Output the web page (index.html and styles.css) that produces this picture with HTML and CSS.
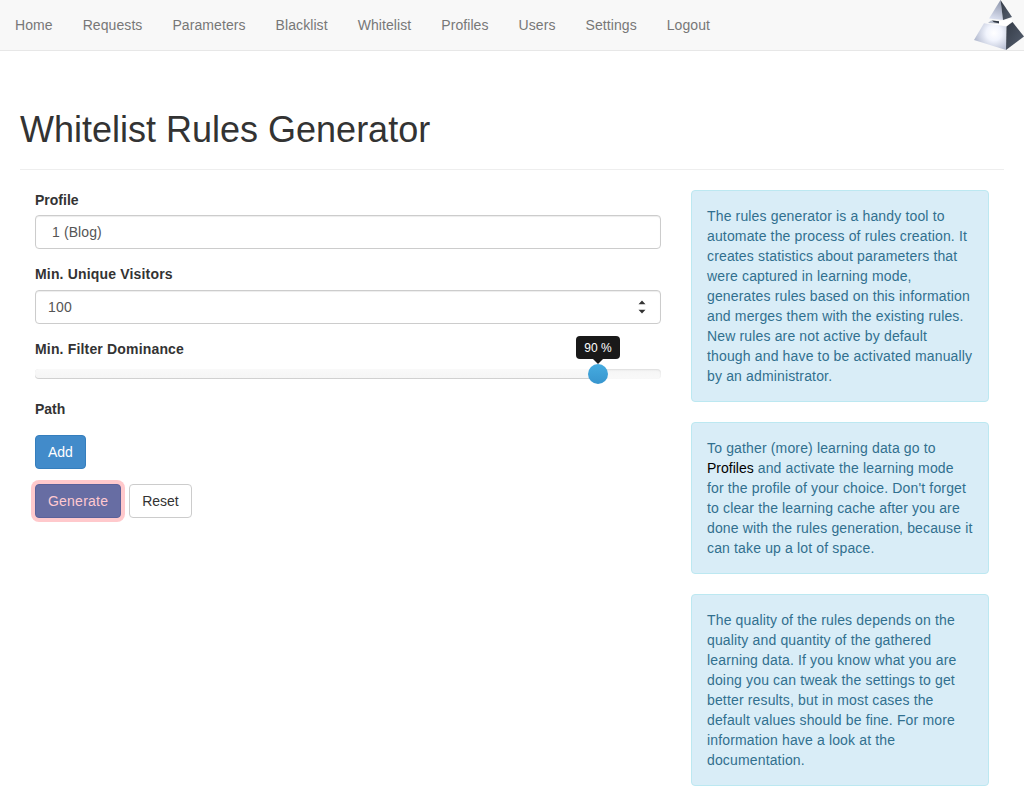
FILE: index.html
```html
<!DOCTYPE html>
<html lang="en">
<head>
<meta charset="utf-8">
<title>Whitelist Rules Generator</title>
<link rel="stylesheet" href="styles.css">
</head>
<body>
<nav class="navbar">
  <ul class="nav">
    <li>Home</li><li>Requests</li><li>Parameters</li><li>Blacklist</li><li>Whitelist</li><li>Profiles</li><li>Users</li><li>Settings</li><li>Logout</li>
  </ul>
  <svg class="logo" width="50" height="50" viewBox="0 0 50 50">
    <defs>
      <radialGradient id="face" cx="20" cy="33" r="22" gradientUnits="userSpaceOnUse"><stop offset="0" stop-color="#fff"/><stop offset=".35" stop-color="#f1f4fd"/><stop offset="1" stop-color="#a9b1c8"/></radialGradient>
      <linearGradient id="tip" x1="0.6" y1="0" x2="0.4" y2="1"><stop offset="0" stop-color="#8e96ac"/><stop offset="1" stop-color="#dde2f2"/></linearGradient>
      <linearGradient id="side" x1="0" y1="0" x2="1" y2="1"><stop offset="0" stop-color="#343b47"/><stop offset="1" stop-color="#566070"/></linearGradient>
    </defs>
    <path fill="url(#tip)" d="M26.500 0 15 18.500 29 20z"/>
    <path fill="url(#side)" d="M26.500 0 38 17 29 20z"/>
    <path fill="#b5bccb" d="M17 20.500 25 21.200 25 23.800 14 23z"/>
    <path fill="#303743" d="M18 20.500 25 21.200 25 23.200 20 22.200z"/>
    <path fill="#fff" d="M25 21 38 19 38 21.500 32 26 12 23.500 25 24z"/>
    <path fill="url(#face)" d="M10 23.300 32.500 26.500 32 50 0 40z"/>
    <path fill="url(#side)" d="M32.500 26.500 38.500 22 50 36.500 32 50z"/>
  </svg>
</nav>
<main class="page">
  <h1 class="page-header">Whitelist Rules Generator</h1>
  <div class="row">
    <form class="main-col">
      <div class="group">
        <span class="label">Profile</span>
        <div class="control select">1 (Blog)</div>
      </div>
      <div class="group">
        <span class="label">Min. Unique Visitors</span>
        <div class="control number">100
          <svg width="8" height="14" viewBox="0 0 8 14"><path fill="#333" d="M.5 4.200 4 .5 7.500 4.200zM.5 9.800 4 13.500 7.500 9.800z"/></svg>
        </div>
      </div>
      <div class="group slider-group">
        <span class="label">Min. Filter Dominance</span>
        <div class="slider">
          <div class="selection"></div>
          <div class="handle"><span class="tooltip">90 %</span></div>
        </div>
      </div>
      <div class="path"><span class="label">Path</span></div>
      <div class="actions"><span class="btn primary">Add</span></div>
      <div class="actions"><span class="btn primary generate">Generate</span><span class="btn">Reset</span></div>
    </form>
    <aside class="side-col">
      <div class="alert">The rules generator is a handy tool to<br>automate the process of rules creation. It<br>creates statistics about parameters that<br>were captured in learning mode,<br>generates rules based on this information<br>and merges them with the existing rules.<br>New rules are not active by default<br>though and have to be activated manually<br>by an administrator.</div>
      <div class="alert">To gather (more) learning data go to<br><span class="link">Profiles</span> and activate the learning mode<br>for the profile of your choice. Don't forget<br>to clear the learning cache after you are<br>done with the rules generation, because it<br>can take up a lot of space.</div>
      <div class="alert">The quality of the rules depends on the<br>quality and quantity of the gathered<br>learning data. If you know what you are<br>doing you can tweak the settings to get<br>better results, but in most cases the<br>default values should be fine. For more<br>information have a look at the<br>documentation.</div>
    </aside>
  </div>
</main>
</body>
</html>
```
FILE: styles.css
```css
* { box-sizing: border-box; }
body {
  margin: 0;
  height: 800px;
  overflow: hidden;
  background: #fff;
  color: #333;
  font: 14px/20px "Nimbus Sans", "Liberation Sans", Arial, sans-serif;
}
.navbar {
  display: flex;
  justify-content: space-between;
  height: 51px;
  background: #f8f8f8;
  border-bottom: 1px solid #e7e7e7;
  color: #777;
}
.nav { display: flex; margin: 0; padding: 0; list-style: none; letter-spacing: .078px; }
.nav li { padding: 15px; white-space: nowrap; }
.logo { display: block; }
.page { padding: 59px 20px 0; }
.page-header {
  margin: 0 0 20px;
  height: 60px;
  border-bottom: 1px solid #eee;
  font-size: 36px;
  font-weight: 400;
  line-height: 40px;
}
.row { display: grid; grid-template-columns: 626px 298px; column-gap: 30px; padding: 0 15px; }
.group { margin-bottom: 15px; }
.label { display: block; margin-bottom: 5px; font-weight: 700; }
.group + .group .label { margin-bottom: 6px; letter-spacing: .17px; }
.control {
  display: flex;
  align-items: center;
  height: 34px;
  padding: 0 12px;
  border: 1px solid #ccc;
  border-radius: 4px;
  box-shadow: inset 0 1px 1px rgba(0, 0, 0, .075);
  color: #555;
}
.select { padding-left: 16px; letter-spacing: .1px; }
.number { justify-content: space-between; padding-right: 14px; letter-spacing: .2px; }
.slider-group { margin-bottom: 20px; }
.slider-group .label { padding-bottom: 4px; }
.slider {
  position: relative;
  height: 10px;
  border-radius: 4px;
  background: linear-gradient(#f5f5f5, #f9f9f9);
  box-shadow: inset 0 1px 2px rgba(0, 0, 0, .1);
}
.selection {
  width: 563px;
  height: 10px;
  border-radius: 4px;
  background: linear-gradient(#f9f9f9, #f5f5f5);
  box-shadow: inset 0 -1px 0 rgba(0, 0, 0, .15);
}
.handle {
  position: absolute;
  left: 553px;
  top: -5px;
  width: 20px;
  height: 20px;
  border-radius: 50%;
  background: linear-gradient(#46ace0, #3795ce);
}
.tooltip {
  position: absolute;
  left: -12px;
  top: -28px;
  width: 44px;
  height: 23px;
  border-radius: 4px;
  background: #191919;
  color: #fff;
  font-size: 12px;
  line-height: 24px;
  text-align: center;
}
.tooltip::after {
  content: "";
  position: absolute;
  left: 17px;
  top: 23px;
  border: 5px solid transparent;
  border-top-color: #191919;
  border-bottom: 0;
}
.path { height: 36px; }
.actions { display: flex; gap: 8px; margin-bottom: 15px; }
.btn {
  height: 34px;
  padding: 6px 12px;
  border: 1px solid #ccc;
  border-radius: 4px;
  background: #fff;
}
.primary { background: #428bca; border-color: #357ebd; color: #fff; }
.generate {
  background: #676da3;
  border-color: #5b619a;
  color: #ffc9d0;
  letter-spacing: .22px;
  box-shadow: 0 0 0 4px #ffc9cc;
}
.alert {
  margin-bottom: 20px;
  padding: 15px;
  border: 1px solid #bce8f1;
  border-radius: 4px;
  background: #d9edf7;
  color: #31708f;
  letter-spacing: .15px;
  white-space: nowrap;
}
.link { color: #000; letter-spacing: 0; }
```
